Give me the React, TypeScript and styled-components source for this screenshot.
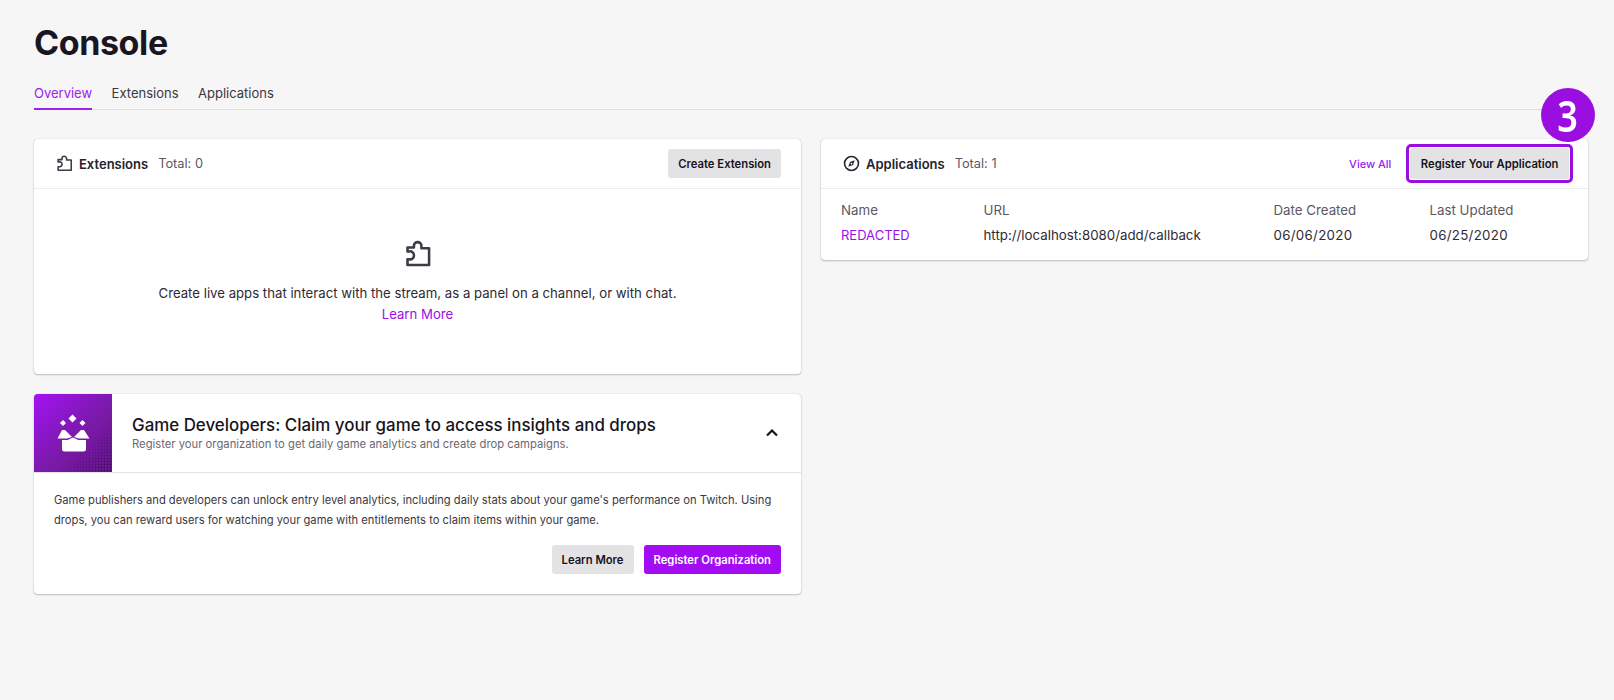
import styled, { createGlobalStyle } from "styled-components";

const GlobalStyle = createGlobalStyle`
  * {
    box-sizing: border-box;
  }
  html, body {
    margin: 0;
    background: #f6f6f6;
  }
  body {
    font-family: Inter, "Liberation Sans", sans-serif;
    color: #1f1b24;
  }
`;

const PuzzleIcon = ({ size }: { size: number }) => (
  <svg width={size} height={size} viewBox="0 0 24 24" fill="none" stroke="#3f3a45" strokeWidth="2.2" strokeLinejoin="round">
    <path d="M3 6.5H8.5V5A3.2 3.2 0 0 1 14.9 5V7H21.5V21.5H3V16.5H4.5A3.2 3.2 0 0 0 8.5 13 3.2 3.2 0 0 0 4.5 9.8H3Z" />
  </svg>
);

const CompassIcon = () => (
  <svg width="17" height="17" viewBox="0 0 20 20" fill="none">
    <circle cx="10" cy="10" r="8.2" stroke="#2a2630" strokeWidth="1.9" />
    <path d="M13.8 6.2 11.8 11.8 6.2 13.8 8.2 8.2Z M10 9a1 1 0 1 0 .01 0Z" fill="#2a2630" fillRule="evenodd" />
  </svg>
);

const GiftArt = () => (
  <svg width="78" height="78" viewBox="0 0 78 78">
    <defs>
      <pattern id="dots" width="3" height="3" patternUnits="userSpaceOnUse">
        <circle cx="1.5" cy="1.5" r="0.9" fill="#30084f" />
      </pattern>
      <linearGradient id="fade" x1="0.35" y1="0.35" x2="1" y2="1">
        <stop offset="0.45" stopColor="#fff" stopOpacity="0" />
        <stop offset="1" stopColor="#fff" stopOpacity="0.9" />
      </linearGradient>
      <mask id="dotMask">
        <rect width="78" height="78" fill="url(#fade)" />
      </mask>
    </defs>
    <rect width="78" height="78" fill="url(#dots)" mask="url(#dotMask)" />
    <g fill="#fff">
      <path d="M38.5 20.5 42.5 24.5 38.5 28.5 34.5 24.5Z" />
      <path d="M29 26 32 29 29 32 26 29Z" />
      <path d="M48.5 26 51.5 29 48.5 32 45.5 29Z" />
      <path d="M38 43 31 36 28 36 23.5 44.5 33 44.5Z" />
      <path d="M40 43 47 36 50 36 55.5 44.5 45 44.5Z" />
      <path d="M28 46H33.5L39 43.5 44.5 46H52V55a2.5 2.5 0 0 1-2.5 2.5H30.5A2.5 2.5 0 0 1 28 55Z" />
    </g>
  </svg>
);

export default function App() {
  return (
    <Page>
      <GlobalStyle />
      <Title>Console</Title>
      <Tabs>
        <Tab $active>Overview</Tab>
        <Tab>Extensions</Tab>
        <Tab>Applications</Tab>
      </Tabs>
      <Columns>
        <Column>
          <ExtensionsCard>
            <CardHeader>
              <HeaderTitle>
                <PuzzleIcon size={17} />
                <HeaderLabel>Extensions</HeaderLabel>
                <Total>Total: 0</Total>
              </HeaderTitle>
              <Button>Create Extension</Button>
            </CardHeader>
            <EmptyBody>
              <PuzzleIcon size={28} />
              <EmptyText>Create live apps that interact with the stream, as a panel on a channel, or with chat.</EmptyText>
              <PurpleLink>Learn More</PurpleLink>
            </EmptyBody>
          </ExtensionsCard>
          <Card>
            <Banner>
              <BannerArt>
                <GiftArt />
              </BannerArt>
              <BannerText>
                <BannerTitle>Game Developers: Claim your game to access insights and drops</BannerTitle>
                <BannerSub>Register your organization to get daily game analytics and create drop campaigns.</BannerSub>
              </BannerText>
              <Chevron width="16" height="16" viewBox="0 0 16 16" fill="none">
                <path d="M3 10.5 8 5.5 13 10.5" stroke="#16131a" strokeWidth="2.2" />
              </Chevron>
            </Banner>
            <BannerBody>
              <Paragraph>
                Game publishers and developers can unlock entry level analytics, including daily stats about your game's performance on Twitch. Using drops, you can reward users for watching your game with entitlements to claim items within your game.
              </Paragraph>
              <Actions>
                <Button>Learn More</Button>
                <Button $primary>Register Organization</Button>
              </Actions>
            </BannerBody>
          </Card>
        </Column>
        <Column>
          <Card>
            <CardHeader>
              <HeaderTitle>
                <CompassIcon />
                <HeaderLabel>Applications</HeaderLabel>
                <Total>Total: 1</Total>
              </HeaderTitle>
              <HeaderActions>
                <ViewAll>View All</ViewAll>
                <Highlight>
                  <Button>Register Your Application</Button>
                  <StepBadge>
                    <StepDigit>3</StepDigit>
                  </StepBadge>
                </Highlight>
              </HeaderActions>
            </CardHeader>
            <AppTable>
              <HeadCell>Name</HeadCell>
              <HeadCell>URL</HeadCell>
              <HeadCell>Date Created</HeadCell>
              <HeadCell>Last Updated</HeadCell>
              <AppName>REDACTED</AppName>
              <Cell>http://localhost:8080/add/callback</Cell>
              <DateCell>06/06/2020</DateCell>
              <DateCell>06/25/2020</DateCell>
            </AppTable>
          </Card>
        </Column>
      </Columns>
    </Page>
  );
}

const Page = styled.div`
  width: 1614px;
  height: 700px;
  padding: 23px 26px 0 34px;
  overflow: hidden;
`;

const Title = styled.h1`
  margin: 0;
  font-size: 34px;
  line-height: 40px;
  font-weight: 700;
  letter-spacing: -0.4px;
  color: #1a1523;
`;

const Tabs = styled.div`
  display: flex;
  gap: 19.5px;
  margin-top: 18px;
  border-bottom: 1px solid #dfdfe2;
  height: 29px;
`;

const Tab = styled.div<{ $active?: boolean }>`
  font-size: 13px;
  line-height: 24px;
  height: 29px;
  color: ${(p) => (p.$active ? "#9a22ee" : "#3b3742")};
  border-bottom: ${(p) => (p.$active ? "2px solid #9a22ee" : "none")};
`;

const Columns = styled.div`
  display: grid;
  grid-template-columns: 767px 767px;
  gap: 20px;
  margin-top: 29px;
  align-items: start;
`;

const Column = styled.div`
  display: flex;
  flex-direction: column;
  gap: 20px;
`;

const Card = styled.section`
  background: #fff;
  border-radius: 4px;
  box-shadow: 0 0 1px rgba(0, 0, 0, 0.25), 0 1px 2px rgba(0, 0, 0, 0.22);
  overflow: visible;
`;

const ExtensionsCard = styled(Card)`
  height: 235px;
`;

const CardHeader = styled.div`
  height: 50px;
  display: flex;
  align-items: center;
  justify-content: space-between;
  padding: 0 20px 0 22px;
  border-bottom: 1px solid #ececee;
`;

const HeaderTitle = styled.div`
  display: flex;
  align-items: center;
`;

const HeaderLabel = styled.span`
  font-size: 13px;
  font-weight: 600;
  margin-left: 6px;
  color: #26222c;
`;

const Total = styled.span`
  font-size: 12.8px;
  margin-left: 10px;
  color: #5c5862;
`;

const Button = styled.button<{ $primary?: boolean }>`
  height: 29px;
  padding: 0 10px;
  border: 0;
  border-radius: 3px;
  font-family: inherit;
  font-size: 11.25px;
  font-weight: 600;
  white-space: nowrap;
  background: ${(p) => (p.$primary ? "#a30cf2" : "#e3e3e6")};
  color: ${(p) => (p.$primary ? "#fff" : "#16131a")};
`;

const EmptyBody = styled.div`
  display: flex;
  flex-direction: column;
  align-items: center;
  padding-top: 51px;
`;

const EmptyText = styled.div`
  margin-top: 15px;
  font-size: 13.2px;
  line-height: 20px;
  color: #2e2a33;
`;

const PurpleLink = styled.a`
  font-size: 13.2px;
  line-height: 20px;
  margin-top: 1px;
  color: #9a10e8;
`;

const Banner = styled.div`
  height: 79px;
  display: flex;
  align-items: center;
  border-bottom: 1px solid #e2e2e5;
`;

const BannerArt = styled.div`
  width: 78px;
  height: 78px;
  flex: none;
  line-height: 0;
  border-radius: 4px 0 0 0;
  background: linear-gradient(135deg, #a412f5 0%, #7a1aa8 55%, #6a168f 100%);
`;

const BannerText = styled.div`
  margin-left: 20px;
  margin-top: -3px;
  flex: 1;
`;

const BannerTitle = styled.div`
  font-size: 16.9px;
  line-height: 24px;
  font-weight: 500;
  color: #17141c;
`;

const BannerSub = styled.div`
  font-size: 11.25px;
  line-height: 13px;
  margin-top: 1px;
  color: #6b6870;
`;

const Chevron = styled.svg`
  margin-right: 21px;
`;

const BannerBody = styled.div`
  padding: 18px 20px 20px 20px;
`;

const Paragraph = styled.p`
  margin: 0;
  font-size: 11.18px;
  line-height: 19.5px;
  color: #3c3841;
`;

const Actions = styled.div`
  display: flex;
  justify-content: flex-end;
  gap: 10px;
  margin-top: 15px;
`;

const HeaderActions = styled.div`
  display: flex;
  align-items: center;
  margin-right: -5px;
`;

const ViewAll = styled.a`
  font-size: 11px;
  font-weight: 500;
  color: #9a22ee;
  margin-right: 15px;
`;

const Highlight = styled.div`
  position: relative;
  padding: 1px;
  border: 3px solid #9a0fe0;
  border-radius: 5px;
  display: flex;

  ${Button} {
    height: 31px;
    padding: 0 10.5px;
  }
`;

const StepBadge = styled.div`
  position: absolute;
  top: -59px;
  right: -25px;
  width: 54px;
  height: 54px;
  border-radius: 50%;
  background: #9a0fe0;
  color: #fff;
  display: flex;
  align-items: center;
  justify-content: center;
`;

const StepDigit = styled.span`
  font-family: "Noto Sans", sans-serif;
  font-size: 44px;
  font-weight: 600;
  line-height: 1;
  transform: scaleX(0.82);
`;

const AppTable = styled.div`
  display: grid;
  grid-template-columns: 142.5px 290px 156px 1fr;
  grid-auto-rows: 25px;
  padding: 8px 20px 13px 20px;
  align-items: center;
`;

const HeadCell = styled.div`
  font-size: 13.3px;
  color: #5c5862;
`;

const Cell = styled.div`
  font-size: 13.3px;
  color: #2e2a33;
`;

const DateCell = styled(Cell)`
  letter-spacing: 0.3px;
`;

const AppName = styled.a`
  font-size: 13px;
  color: #9a10e8;
`;
